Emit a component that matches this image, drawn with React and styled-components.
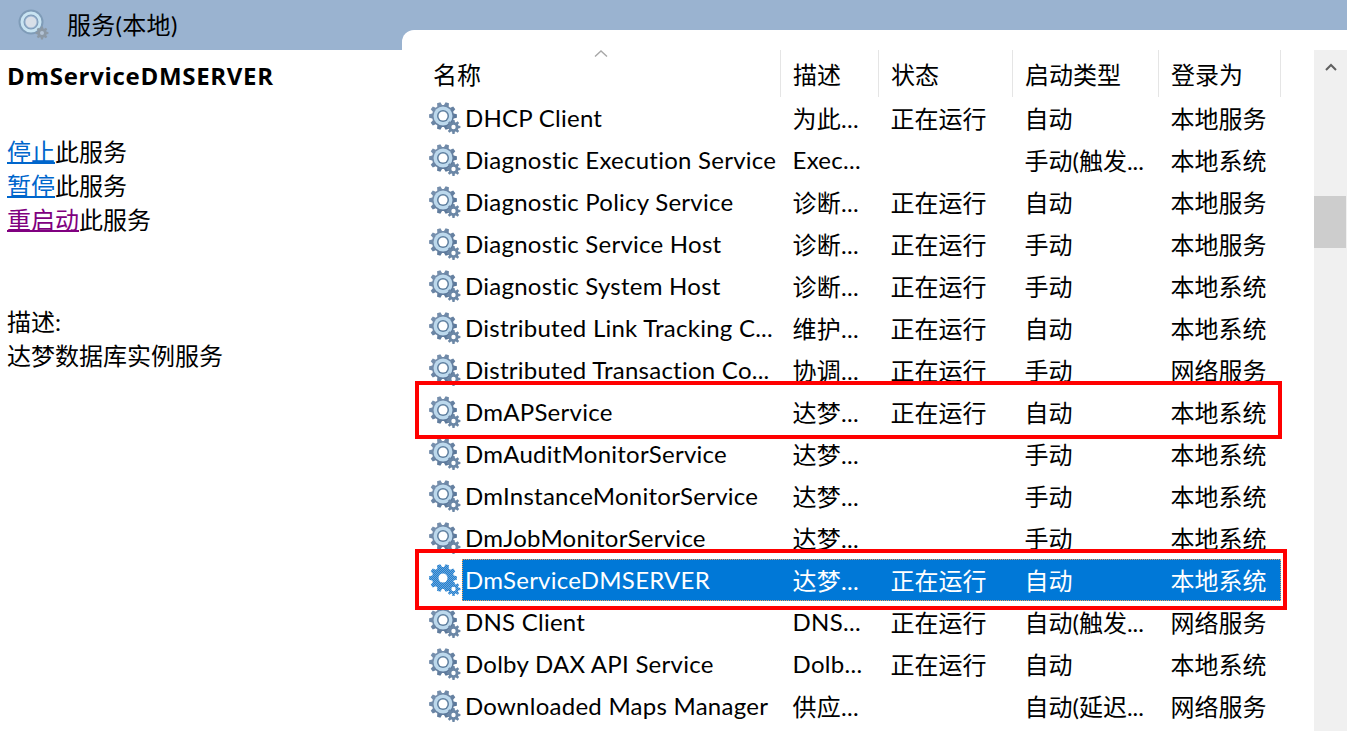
import styled, { createGlobalStyle } from 'styled-components';

const services = [
  { name: 'DHCP Client', desc: '为此...', status: '正在运行', type: '自动', logon: '本地服务' },
  { name: 'Diagnostic Execution Service', desc: 'Exec...', status: '', type: '手动(触发...', logon: '本地系统' },
  { name: 'Diagnostic Policy Service', desc: '诊断...', status: '正在运行', type: '自动', logon: '本地服务' },
  { name: 'Diagnostic Service Host', desc: '诊断...', status: '正在运行', type: '手动', logon: '本地服务' },
  { name: 'Diagnostic System Host', desc: '诊断...', status: '正在运行', type: '手动', logon: '本地系统' },
  { name: 'Distributed Link Tracking C...', desc: '维护...', status: '正在运行', type: '自动', logon: '本地系统' },
  { name: 'Distributed Transaction Co...', desc: '协调...', status: '正在运行', type: '手动', logon: '网络服务' },
  { name: 'DmAPService', desc: '达梦...', status: '正在运行', type: '自动', logon: '本地系统', mark: 'small' },
  { name: 'DmAuditMonitorService', desc: '达梦...', status: '', type: '手动', logon: '本地系统' },
  { name: 'DmInstanceMonitorService', desc: '达梦...', status: '', type: '手动', logon: '本地系统' },
  { name: 'DmJobMonitorService', desc: '达梦...', status: '', type: '手动', logon: '本地系统' },
  { name: 'DmServiceDMSERVER', desc: '达梦...', status: '正在运行', type: '自动', logon: '本地系统', mark: 'big', selected: true },
  { name: 'DNS Client', desc: 'DNS...', status: '正在运行', type: '自动(触发...', logon: '网络服务' },
  { name: 'Dolby DAX API Service', desc: 'Dolb...', status: '正在运行', type: '自动', logon: '本地系统' },
  { name: 'Downloaded Maps Manager', desc: '供应...', status: '', type: '自动(延迟...', logon: '网络服务' },
];

const GlobalStyle = createGlobalStyle`
  html, body {
    margin: 0;
    height: 100%;
    overflow: hidden;
    background: #fff;
  }
  body {
    font-family: "Lato", "Noto Sans CJK SC", sans-serif;
    font-size: 24px;
    color: #000;
  }
`;

// gear outline, teeth as trapezoids around a circle
const gearPath = (cx, cy, outer, inner, teeth) => {
  const pts = [];
  const step = (Math.PI * 2) / teeth;
  for (let i = 0; i < teeth; i++) {
    const a = i * step;
    const at = (r, d) => `${(cx + r * Math.cos(a + d)).toFixed(2)} ${(cy + r * Math.sin(a + d)).toFixed(2)}`;
    pts.push(at(inner, -step * 0.36), at(outer, -step * 0.2), at(outer, step * 0.2), at(inner, step * 0.36));
  }
  return `M${pts.join('L')}Z`;
};

const GearIcon = ({ selected }) => (
  <GearSvg viewBox="0 0 34 34" aria-hidden="true">
    <defs>
      <linearGradient id="gearBody" x1="0" y1="0" x2="1" y2="1">
        <stop offset="0" stopColor="#8098b4" />
        <stop offset="1" stopColor="#4f6d91" />
      </linearGradient>
      <pattern id="gearDither" width="2" height="2" patternUnits="userSpaceOnUse">
        <rect width="2" height="2" fill="#1c7fd4" />
        <rect width="1" height="1" fill="#6fa5d6" />
        <rect x="1" y="1" width="1" height="1" fill="#6fa5d6" />
      </pattern>
    </defs>
    <path d={gearPath(14, 15, 14, 11, 10)} fill={selected ? 'url(#gearDither)' : 'url(#gearBody)'} />
    {!selected && <circle cx="14" cy="15" r="9.5" fill="#bcd8ec" />}
    {!selected && <circle cx="14" cy="15" r="6" fill="#5f7f9f" />}
    <circle cx="14" cy="15" r="4.5" fill="#fff" />
    <path d={gearPath(24.5, 26, 7, 5, 8)} fill={selected ? 'url(#gearDither)' : '#6b87a6'} />
    <circle cx="24.5" cy="26" r="2.2" fill="#fff" />
  </GearSvg>
);

const TitleIcon = () => (
  <svg width="32" height="32" viewBox="0 0 32 32" aria-hidden="true">
    <circle cx="13" cy="13" r="9.5" fill="none" stroke="#7f9cb8" strokeWidth="6" />
    <circle cx="13" cy="13" r="9" fill="none" stroke="#c9e4f2" strokeWidth="3" />
    <circle cx="13" cy="13" r="5.5" fill="#d8dfe8" />
    <path d={gearPath(24, 24, 6.5, 4.8, 8)} fill="#8c99a6" />
    <circle cx="24" cy="24" r="2" fill="#b3c3d6" />
  </svg>
);

export default function App() {
  return (
    <>
      <GlobalStyle />
      <Window>
        <LeftPane>
          <PaneTitle>
            <TitleIcon />
            <TitleText>服务(本地)</TitleText>
          </PaneTitle>
          <Detail>
            <ServiceName>DmServiceDMSERVER</ServiceName>
            <Actions>
              <div><ActionLink href="#">停止</ActionLink>此服务</div>
              <div><ActionLink href="#">暂停</ActionLink>此服务</div>
              <div><ActionLink href="#" $visited>重启动</ActionLink>此服务</div>
            </Actions>
            <Description>
              <div>描述:</div>
              <div>达梦数据库实例服务</div>
            </Description>
          </Detail>
        </LeftPane>
        <RightPane>
          <Content>
            <List>
              <HeaderRow>
                <HeaderCell>
                  <SortCaret viewBox="0 0 14 7" aria-hidden="true">
                    <path d="M1 6.5 7 1l6 5.5" fill="none" stroke="#a8a8a8" strokeWidth="1.4" />
                  </SortCaret>
                  名称
                </HeaderCell>
                <HeaderCell>描述</HeaderCell>
                <HeaderCell>状态</HeaderCell>
                <HeaderCell>启动类型</HeaderCell>
                <HeaderCell>登录为</HeaderCell>
              </HeaderRow>
              {services.map((s) => (
                <Row key={s.name} $mark={s.mark} $selected={s.selected}>
                  <NameCell>
                    <GearIcon selected={s.selected} />
                    <NameText>{s.name}</NameText>
                  </NameCell>
                  <Cell>{s.desc}</Cell>
                  <Cell>{s.status}</Cell>
                  <Cell>{s.type}</Cell>
                  <Cell>{s.logon}</Cell>
                </Row>
              ))}
            </List>
            <Scrollbar>
              <ScrollArrow viewBox="0 0 12 8" aria-hidden="true">
                <path d="M1 7 6 2l5 5" fill="none" stroke="#606060" strokeWidth="2" />
              </ScrollArrow>
              <ScrollThumb />
            </Scrollbar>
          </Content>
        </RightPane>
      </Window>
    </>
  );
}

const Window = styled.div`
  display: flex;
  height: 731px;
  overflow: hidden;
`;

const LeftPane = styled.div`
  width: 402px;
  flex: none;
`;

const PaneTitle = styled.div`
  display: flex;
  align-items: center;
  gap: 17px;
  height: 50px;
  padding-left: 18px;
  background: #9ab3d0;
`;

const TitleText = styled.span`
  margin-bottom: 3px;
  letter-spacing: 0.3px;
`;

const Detail = styled.div`
  padding: 9px 7px 0;
`;

const ServiceName = styled.div`
  font-family: "Open Sans", sans-serif;
  font-weight: 700;
  font-size: 24px;
  letter-spacing: 0.7px;
  line-height: 34px;
`;

const Actions = styled.div`
  margin-top: 42px;
  line-height: 34px;
`;

const ActionLink = styled.a`
  color: ${({ $visited }) => ($visited ? '#800080' : '#0066cc')};
  text-decoration-thickness: 2px;
`;

const Description = styled.div`
  margin-top: 68px;
  line-height: 34px;
`;

const RightPane = styled.div`
  flex: 1;
  min-width: 0;
  padding-top: 30px;
  background: #9ab3d0;
`;

const Content = styled.div`
  display: flex;
  height: 701px;
  padding: 20px 0 0 18px;
  box-sizing: border-box;
  background: #fff;
  border-top-left-radius: 12px;
`;

const List = styled.div`
  width: 861px;
  flex: none;
`;

const columns = '361px 98px 134px 146px 122px';

const HeaderRow = styled.div`
  display: grid;
  grid-template-columns: ${columns};
  height: 47px;
`;

const HeaderCell = styled.div`
  position: relative;
  display: flex;
  align-items: center;
  padding-left: 12px;
  border-right: 1px solid #e5e5e5;
  white-space: nowrap;

  &:first-child {
    padding-left: 13px;
  }
`;

const SortCaret = styled.svg`
  position: absolute;
  top: 0;
  left: 174px;
  width: 14px;
  height: 7px;
`;

const Row = styled.div`
  position: relative;
  z-index: ${({ $mark }) => ($mark ? 1 : 0)};
  display: grid;
  grid-template-columns: ${columns};
  height: 42px;
  align-items: stretch;
  color: ${({ $selected }) => ($selected ? '#fff' : '#000')};

  ${({ $selected }) =>
    $selected &&
    `
    &::before {
      content: "";
      position: absolute;
      z-index: -1;
      left: 42px;
      right: 0;
      top: 0;
      bottom: 0;
      box-sizing: border-box;
      background: #0078d7;
      border: 1px dotted #f2a25c;
    }
  `}

  ${({ $mark }) =>
    $mark &&
    `
    &::after {
      content: "";
      position: absolute;
      left: -5px;
      right: ${$mark === 'big' ? '-6px' : '-1px'};
      top: -10px;
      bottom: ${$mark === 'big' ? '-9px' : '-6px'};
      border: 4px solid #f00;
      pointer-events: none;
    }
  `}
`;

const NameCell = styled.div`
  display: flex;
  align-items: center;
  padding-left: 9px;
  min-width: 0;
`;

const GearSvg = styled.svg`
  width: 34px;
  height: 34px;
  flex: none;
`;

const NameText = styled.div`
  flex: 1;
  padding: 0 0 2px 2px;
  letter-spacing: 0.25px;
  white-space: nowrap;
`;

const Cell = styled.div`
  display: flex;
  align-items: center;
  padding: 0 0 2px 11.5px;
  white-space: nowrap;

  &:nth-child(2) {
    letter-spacing: 0.3px;
  }
`;

const Scrollbar = styled.div`
  width: 33px;
  margin-left: 33px;
  flex: none;
  background: #f0f0f0;
  padding-top: 13px;
  box-sizing: border-box;
`;

const ScrollArrow = styled.svg`
  display: block;
  width: 12px;
  height: 8px;
  margin: 0 auto;
`;

const ScrollThumb = styled.div`
  height: 52px;
  width: 32px;
  margin-top: 125px;
  background: #cdcdcd;
`;
